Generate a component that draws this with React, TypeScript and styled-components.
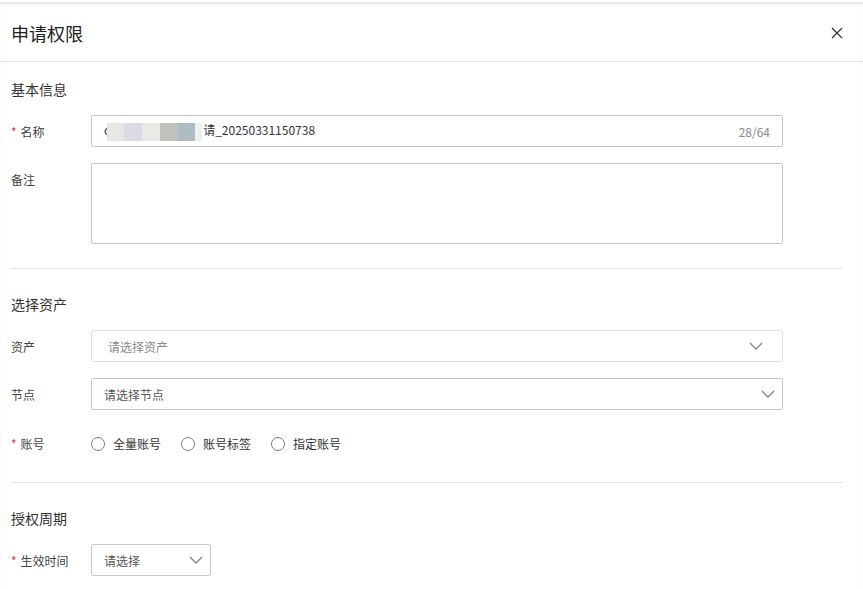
import React from "react";
import styled, { createGlobalStyle } from "styled-components";

const GlobalStyle = createGlobalStyle`
	html, body {
		margin: 0;
		padding: 0;
		background: #fff;
	}
	body {
		font-family: "Noto Sans CJK SC", "Noto Sans", sans-serif;
		color: #333;
	}
`;

const Panel = styled.div`
	width: 863px;
	height: 589px;
	overflow: hidden;
	background: #fff;
	border-top: 2px solid #fff;
	box-shadow: inset 0 3px 3px -1px rgba(0, 0, 0, 0.12);
	box-sizing: border-box;
	padding-top: 3px;
`;

const Header = styled.div`
	height: 56px;
	display: flex;
	align-items: center;
	justify-content: space-between;
	padding: 0 20px 0 11px;
	border-bottom: 1px solid #e4e4e4;
`;

const Title = styled.h1`
	margin: 0;
	font-size: 18px;
	font-weight: 400;
	color: #222;
`;

const Body = styled.div`
	padding: 0 20px 0 11px;
`;

const Section = styled.div<{ $divider?: boolean; $pt?: number }>`
	padding: ${(p) => p.$pt ?? 16}px 0 0;
	border-bottom: ${(p) => (p.$divider ? "1px solid #e4e4e4" : "none")};
`;

const SectionTitle = styled.div`
	font-size: 14px;
	color: #333;
	line-height: 22px;
	margin-bottom: 15px;
`;

const Row = styled.div<{ $align?: string; $mb?: number }>`
	display: flex;
	align-items: ${(p) => p.$align || "center"};
	margin-bottom: ${(p) => (p.$mb ?? 16)}px;
`;

const Label = styled.div<{ $pt?: number }>`
	width: 80px;
	flex: none;
	font-size: 12px;
	color: #444;
	padding-top: ${(p) => p.$pt ?? 0}px;
`;

const Star = styled.span`
	color: #e0393e;
	margin-right: 4px;
`;

const Input = styled.div`
	position: relative;
	width: 692px;
	height: 32px;
	box-sizing: border-box;
	border: 1px solid #c6c6ca;
	border-radius: 2px;
	display: flex;
	align-items: center;
	padding: 0 12px;
	font-size: 12px;
	color: #333;
`;

const Counter = styled.span`
	margin-left: auto;
	color: #888;
	font-size: 12px;
`;

const Mosaic = styled.span`
	display: inline-flex;
	height: 18px;
	margin: 0 1px 0 -3px;
	vertical-align: middle;
`;

const Tile = styled.span<{ $c: string; $w: number }>`
	display: inline-block;
	width: ${(p) => p.$w}px;
	height: 18px;
	background: ${(p) => p.$c};
`;

const TextArea = styled.div`
	width: 692px;
	height: 81px;
	box-sizing: border-box;
	border: 1px solid #c6c6ca;
	border-radius: 2px;
`;

const Select = styled.div<{ $w?: number; $disabled?: boolean }>`
	width: ${(p) => p.$w ?? 692}px;
	height: 32px;
	box-sizing: border-box;
	border: 1px solid ${(p) => (p.$disabled ? "#e2e2e4" : "#c6c6ca")};
	border-radius: 2px;
	display: flex;
	align-items: center;
	justify-content: space-between;
	padding: 0 ${(p) => (p.$disabled ? 19 : 7)}px 0 ${(p) => (p.$disabled ? 16 : 12)}px;
	font-size: 12px;
	color: ${(p) => (p.$disabled ? "#8a8a8a" : "#555")};
`;

const RadioGroup = styled.div`
	display: flex;
	align-items: center;
	gap: 20px;
	font-size: 12px;
	color: #333;
`;

const RadioItem = styled.label`
	display: flex;
	align-items: center;
	gap: 8px;
`;

const Circle = styled.span`
	width: 14px;
	height: 14px;
	box-sizing: border-box;
	border: 1px solid #6f7d93;
	border-radius: 50%;
`;

const Close = () => (
	<svg width="12" height="12" viewBox="0 0 12 12">
		<path d="M1 1L11 11M11 1L1 11" stroke="#333" strokeWidth="1.2" />
	</svg>
);

const Chevron = ({ color = "#777" }: { color?: string }) => (
	<svg width="14" height="8" viewBox="0 0 14 8">
		<path d="M1 1L7 7L13 1" stroke={color} strokeWidth="1.3" fill="none" />
	</svg>
);

const tiles = [
	{ c: "#e6e8e8", w: 17 },
	{ c: "#dadbe6", w: 18 },
	{ c: "#e9eae5", w: 18 },
	{ c: "#c2c0bb", w: 18 },
	{ c: "#aebcc5", w: 17 },
	{ c: "#eef0f0", w: 7 },
];

export default function App() {
	return (
		<>
			<GlobalStyle />
			<Panel>
				<Header>
					<Title>申请权限</Title>
					<Close />
				</Header>
				<Body>
					<Section $divider>
						<SectionTitle>基本信息</SectionTitle>
						<Row>
							<Label>
								<Star>*</Star>名称
							</Label>
							<Input>
								<span>
									c
									<Mosaic>
										{tiles.map((t, i) => (
											<Tile key={i} $c={t.c} $w={t.w} />
										))}
									</Mosaic>
									请_20250331150738
								</span>
								<Counter>28/64</Counter>
							</Input>
						</Row>
						<Row $align="flex-start" $mb={24}>
							<Label $pt={8}>备注</Label>
							<TextArea />
						</Row>
					</Section>
					<Section $divider $pt={24}>
						<SectionTitle>选择资产</SectionTitle>
						<Row>
							<Label>资产</Label>
							<Select $disabled>
								<span>请选择资产</span>
								<Chevron color="#7b8494" />
							</Select>
						</Row>
						<Row $mb={25}>
							<Label>节点</Label>
							<Select>
								<span>请选择节点</span>
								<Chevron color="#7b8494" />
							</Select>
						</Row>
						<Row $mb={30}>
							<Label>
								<Star>*</Star>账号
							</Label>
							<RadioGroup>
								<RadioItem>
									<Circle />
									全量账号
								</RadioItem>
								<RadioItem>
									<Circle />
									账号标签
								</RadioItem>
								<RadioItem>
									<Circle />
									指定账号
								</RadioItem>
							</RadioGroup>
						</Row>
					</Section>
					<Section $pt={24}>
						<SectionTitle>授权周期</SectionTitle>
						<Row>
							<Label>
								<Star>*</Star>生效时间
							</Label>
							<Select $w={120}>
								<span>请选择</span>
								<Chevron color="#7b8494" />
							</Select>
						</Row>
					</Section>
				</Body>
			</Panel>
		</>
	);
}
